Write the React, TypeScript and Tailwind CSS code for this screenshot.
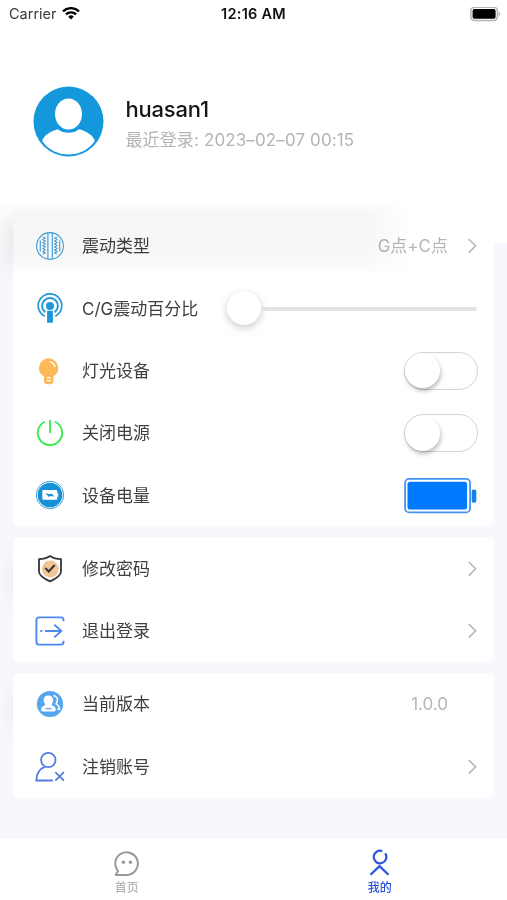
import React, { useState } from "react";

// ICONS ----------------------
const WifiIcon = () => (
  <svg width="18" height="14" viewBox="0 0 18 14" fill="none" stroke="#000" strokeWidth="2.3">
    <path d="M1 4.400a11.400 11.400 0 0 1 16 0" />
    <path d="M3.900 7.400a7.200 7.200 0 0 1 10.200 0" />
    <path d="M6.200 9.700a4 4 0 0 1 5.600 0L9 12.600z" fill="#000" stroke="none" />
  </svg>
);

const StatusBattery = () => (
  <svg width="31" height="15" viewBox="0 0 31 15">
    <rect x="0.8" y="0.3" width="26.6" height="13.2" rx="3.8" fill="#fff" stroke="#b5b5b5" strokeWidth="1.6" />
    <rect x="2.6" y="2.1" width="23" height="9.6" rx="1.8" fill="#000" />
    <path d="M28.7 4.7c1.9.5 1.9 3.9 0 4.4z" fill="#b5b5b5" />
  </svg>
);

const Avatar = () => (
  <svg width="71" height="71" viewBox="0 0 71 71">
    <circle cx="35.5" cy="35.5" r="35" fill="#1597dc" />
    <ellipse cx="35.5" cy="28" rx="13.5" ry="15.6" fill="#fff" />
    <path d="M9.2 55C10.4 49.6 18 44.8 25 43.3c5.5 4.7 15.5 4.7 21 0 7 1.5 14.6 6.3 15.8 11.7C55.5 64 46 68.5 35.5 68.5S15.5 64 9.2 55z" fill="#fff" />
  </svg>
);

const VibrateIcon = () => (
  <svg width="30" height="30" viewBox="0 0 30 30" fill="none" stroke="#3f9fdb" strokeWidth="1.1">
    <circle cx="15" cy="15" r="13.4" />
    <path d="M12.9 2v26M17.3 2v26" />
    <path d="M8 6l2.2 1-2.2 1.5 2.2 1.5-2.2 1.5 2.2 1.5-2.2 1.5 2.2 1.5-2.2 1.5 2.2 1.5-2.2 1.5 2.2 1.5-2.2 1" />
    <path d="M22 6l-2.2 1 2.2 1.5-2.2 1.5 2.2 1.5-2.2 1.5 2.2 1.5-2.2 1.5 2.2 1.5-2.2 1.5 2.2 1.5-2.2 1.5 2.2 1" />
    <path d="M5.3 9.5v11M24.7 9.5v11" />
  </svg>
);

const SignalIcon = () => (
  <svg width="30" height="32" viewBox="0 0 30 32" fill="none" stroke="#1f97d8">
    <path d="M9.7 24.2a11.8 11.8 0 1 1 10.6 0" strokeWidth="1.7" />
    <path d="M10.3 20.3a7.9 7.9 0 1 1 9.4 0" strokeWidth="2" />
    <circle cx="15" cy="14" r="4" fill="#1f97d8" stroke="none" />
    <rect x="12.1" y="18.8" width="5.8" height="12" rx="0.6" fill="#1f97d8" stroke="none" />
  </svg>
);

const BulbIcon = () => (
  <svg width="30" height="30" viewBox="0 0 30 30">
    <path d="M13.6 2.3a9.7 9.7 0 0 0-9.7 9.7c0 3.8 2 6.5 5 8.2V25c0 2 1.5 3.2 3.3 3.2h3c1.8 0 3.3-1.2 3.3-3.2v-4.8c3-1.7 4.8-4.4 4.8-8.2a9.7 9.7 0 0 0-9.7-9.7z" fill="#fdb85a" />
    <path d="M15.5 5.8c2.3.7 3.9 2.3 4.4 4.7" fill="none" stroke="#fff" strokeWidth="1.3" strokeLinecap="round" />
    <path d="M11.6 21.7h4.3M11.6 24.6h4.3" stroke="#fff" strokeWidth="1.3" />
  </svg>
);

const PowerIcon = () => (
  <svg width="30" height="30" viewBox="0 0 30 30" fill="none" stroke="#35ea49" strokeWidth="1.8">
    <path d="M10 3.7a12.2 12.2 0 1 0 10 0M15 2v13" />
  </svg>
);

const DeviceBatteryIcon = () => (
  <svg width="30" height="30" viewBox="0 0 30 30">
    <circle cx="15" cy="15" r="13.7" fill="#fff" stroke="#3a9fd9" strokeWidth="1" />
    <circle cx="15" cy="15" r="12.3" fill="#1690d8" />
    <rect x="7.3" y="10" width="15" height="9.7" rx="1" fill="#fff" />
    <rect x="22.3" y="12.9" width="1" height="4" fill="#fff" />
    <path d="M10.3 13.3l5.2.9.4-1 3.9 3.2-4.9-.4-.7 1.2z" fill="#1690d8" />
  </svg>
);

const ShieldIcon = () => (
  <svg width="30" height="30" viewBox="0 0 30 30" fill="none">
    <circle cx="15.3" cy="15" r="8.4" fill="#f1c795" />
    <path d="M15 2c3 2 7 3.1 11 3.1v12.3c0 3.9-4.5 6.9-11 10-6.5-3.1-11-6.1-11-10V5.1C8 5.1 12 4 15 2z" stroke="#353638" strokeWidth="1.8" strokeLinejoin="round" />
    <path d="M10.2 13.9l3.5 3.6 6-6.5" stroke="#353638" strokeWidth="2" />
  </svg>
);

const ExitIcon = () => (
  <svg width="30" height="30" viewBox="0 0 30 30" fill="none" stroke="#4c8af0" strokeWidth="1.9">
    <path d="M28.5 5.3V4a2.6 2.6 0 0 0-2.6-2.6H4A2.6 2.6 0 0 0 1.4 4v22A2.6 2.6 0 0 0 4 28.6h21.9a2.6 2.6 0 0 0 2.6-2.6v-1.3" />
    <path d="M10 15h16.5M19.3 8.6l7 6.4-7 6.4M5.3 15h2" />
  </svg>
);

const UsersIcon = () => (
  <svg width="30" height="30" viewBox="0 0 30 30">
    <circle cx="15" cy="15" r="13.1" fill="#54a6ee" />
    <path d="M13.3 6.5c-3 0-4.7 2-4.7 4.6 0 1.7.7 3 1.7 4.3-.4 1.4-4.3 1.7-4.3 5.2 0 1.3.7 1.9 2 1.9h10.8c1.3 0 2-.6 2-1.9 0-3.5-3.9-3.8-4.3-5.2 1-1.3 1.7-2.6 1.7-4.3 0-2.6-1.9-4.6-4.9-4.6z" fill="#fff" />
    <path d="M10.5 19.7h5.8" stroke="#54a6ee" strokeWidth="1.3" />
    <path d="M18.3 6.8c3.3.3 4.5 2.3 4.1 4.6-.2 1.4-1 2.2-1.3 3.5 2.3 1 3.3 2.7 3.3 5.3h-2" fill="none" stroke="#fff" strokeWidth="1.5" />
  </svg>
);

const UserRemoveIcon = () => (
  <svg width="30" height="32" viewBox="0 0 30 32" fill="none" stroke="#537ddf" strokeWidth="1.8">
    <circle cx="13.3" cy="9" r="7.2" />
    <path d="M10.2 15.7C4.4 18 1.3 22.8 1.3 29.500h16.500" />
    <path d="M20.3 21.2l8.6 8.4M28.9 21.2l-8.6 8.4" />
  </svg>
);

const Chevron = () => (
  <svg width="10" height="16" viewBox="0 0 10 16" fill="none" stroke="#b4b6b8" strokeWidth="1.6">
    <path d="M0.7 1L7.6 7.800l-6.900 6.800" />
  </svg>
);

const BatteryLevel = () => (
  <svg width="74" height="38" viewBox="0 0 74 38">
    <rect x="1.1" y="2.900" width="65" height="33.500" rx="4" fill="#fff" stroke="#4493f7" strokeWidth="1.800" />
    <rect x="3.500" y="5.700" width="59.600" height="27.900" rx="2.500" fill="#007aff" />
    <rect x="67.700" y="13.500" width="4.600" height="13.200" rx="2" fill="#187fee" />
  </svg>
);

const ChatIcon = () => (
  <svg width="26" height="26" viewBox="0 0 26 26" fill="none" stroke="#999" strokeWidth="2">
    <path d="M1.700 23.900L4 20a11.300 11.300 0 1 1 9.300 3.900z" strokeLinejoin="round" />
    <circle cx="9.400" cy="11.200" r="1.700" fill="#999" stroke="none" />
    <circle cx="16.400" cy="11.200" r="1.700" fill="#999" stroke="none" />
  </svg>
);

const MineIcon = () => (
  <svg width="22" height="28" viewBox="0 0 22 28" fill="none" stroke="#2d54e0" strokeWidth="2.200">
    <path d="M13.200 2.100A6.300 6.300 0 1 0 16.200 4.400" />
    <path d="M1.500 25.800l9-8.700 9 8.700" />
  </svg>
);

// ROWS ----------------------
type RowProps = {
  icon: React.ReactNode;
  label: string;
  children?: React.ReactNode;
};

const Row = ({ icon, label, children }: RowProps) => (
  <div className="flex h-[62.3px] items-center pl-[21px] pr-4">
    <div className="flex w-8 shrink-0 justify-center">{icon}</div>
    <span className="ml-4 whitespace-nowrap pt-[2px] text-[17px] text-[#3d3f42]">{label}</span>
    <div className="flex flex-1 items-center justify-end">{children}</div>
  </div>
);

const Card = ({ children }: { children: React.ReactNode }) => (
  <section className="rounded-md bg-white">{children}</section>
);

const Toggle = ({ label }: { label: string }) => {
  const [on, setOn] = useState(false);

  return (
    <button
      role="switch"
      aria-checked={on}
      aria-label={label}
      onClick={() => setOn(!on)}
      className={`flex h-[38px] w-[74px] items-center rounded-full border-[1.5px] border-[#d4d4d4] ${
        on ? "justify-end bg-green-500" : "justify-start bg-white"
      }`}
    >
      <span className="h-[35px] w-[35px] rounded-full bg-white shadow-[1px_3px_4px_rgba(0,0,0,0.25)]" />
    </button>
  );
};

export default function App() {
  return (
    <div className="relative isolate flex h-[900px] w-[507px] flex-col overflow-hidden bg-[linear-gradient(to_bottom,#fff_243px,#f7f8fd_243px)] font-[Inter,'Noto_Sans_CJK_SC',sans-serif]">
      {/* STATUS BAR */}
      <div className="grid h-7 grid-cols-3 items-center pl-[9px] pr-[6px] text-[14.5px] text-[#111]">
        <div className="flex items-center gap-[5px]">
          <span className="text-[#3b3b3b]">Carrier</span>
          <WifiIcon />
        </div>
        <div className="-ml-[3px] text-center font-semibold tracking-[0.25px]">12:16 AM</div>
        <div className="flex justify-end">
          <StatusBattery />
        </div>
      </div>

      {/* PROFILE */}
      <header className="flex h-[187px] items-start pl-[32.5px] pt-[58px]">
        <Avatar />
        <div className="ml-[22px] pt-[7px]">
          <h1 className="text-[22px] font-medium leading-8 tracking-[-0.2px] text-[#141518]">huasan1</h1>
          <p className="text-[17px] leading-[30px] tracking-[0.12px] text-[#b2b5b8]">最近登录: 2023–02–07 00:15</p>
        </div>
      </header>

      {/* SETTINGS */}
      <main className="flex flex-1 flex-col gap-[11px] pl-[13px] pr-[13px]">
        <Card>
          <Row icon={<VibrateIcon />} label="震动类型">
            <span className="mr-[20px] pt-[2px] text-[17px] text-[#b4b6b8]">G点+C点</span>
            <Chevron />
          </Row>
          <Row icon={<SignalIcon />} label="C/G震动百分比">
            <div className="ml-[29px] mr-px flex flex-1 items-center">
              <span className="h-[34px] w-[34px] shrink-0 rounded-full bg-white shadow-[0_3px_9px_rgba(0,0,0,0.2)]" />
              <span className="mt-[2px] h-[4px] flex-1 rounded-r-full bg-[#e3e3e3]" />
            </div>
          </Row>
          <Row icon={<BulbIcon />} label="灯光设备">
            <Toggle label="灯光设备" />
          </Row>
          <Row icon={<PowerIcon />} label="关闭电源">
            <Toggle label="关闭电源" />
          </Row>
          <Row icon={<DeviceBatteryIcon />} label="设备电量">
            <BatteryLevel />
          </Row>
        </Card>

        <Card>
          <Row icon={<ShieldIcon />} label="修改密码">
            <Chevron />
          </Row>
          <Row icon={<ExitIcon />} label="退出登录">
            <Chevron />
          </Row>
        </Card>

        <Card>
          <Row icon={<UsersIcon />} label="当前版本">
            <span className="mr-[30px] pt-[2px] text-[17px] text-[#b4b6b8]">1.0.0</span>
          </Row>
          <Row icon={<UserRemoveIcon />} label="注销账号">
            <Chevron />
          </Row>
        </Card>
      </main>

      {/* TAB BAR */}
      <nav className="grid h-[61px] grid-cols-2 bg-white text-[12px] leading-4">
        <button className="flex flex-col items-center gap-[3px] pt-[12px] text-[#a0a4a7]">
          <ChatIcon />
          首页
        </button>
        <button className="flex flex-col items-center gap-[3px] pr-px pt-[10px] font-medium text-[#2d54e0]">
          <MineIcon />
          我的
        </button>
      </nav>

      {/* SOFT SHADE OVER THE TOP OF THE LIST */}
      <div className="pointer-events-none absolute left-[13px] top-[204px] h-[72px] w-[400px] bg-[linear-gradient(to_bottom,#fbfbfb,#f6f6f6_12px,#f6f6f6_46px,#f9f9f9_58px,#fff)] mix-blend-multiply [mask-image:linear-gradient(to_right,#000_350px,transparent)]" />
      <div className="pointer-events-none absolute left-0 top-[204px] h-[86px] w-[13px] bg-[linear-gradient(to_bottom,#fcfcfc,#f8f8f8_20px,#f3f4f6_45px,#f7f8fd)]" />
      <div className="pointer-events-none absolute left-0 top-[212px] h-[70px] w-[13px] bg-[linear-gradient(to_right,transparent,#0000000c)] [mask-image:linear-gradient(to_bottom,transparent,#000_20px,transparent)]" />
      <div className="pointer-events-none absolute left-0 top-[535px] h-[90px] w-[13px] bg-[linear-gradient(to_right,transparent,#00000008)] [mask-image:linear-gradient(to_bottom,transparent,#000,transparent)]" />
      <div className="pointer-events-none absolute left-0 top-[670px] h-[80px] w-[13px] bg-[linear-gradient(to_right,transparent,#00000008)] [mask-image:linear-gradient(to_bottom,transparent,#000,transparent)]" />
    </div>
  );
}
